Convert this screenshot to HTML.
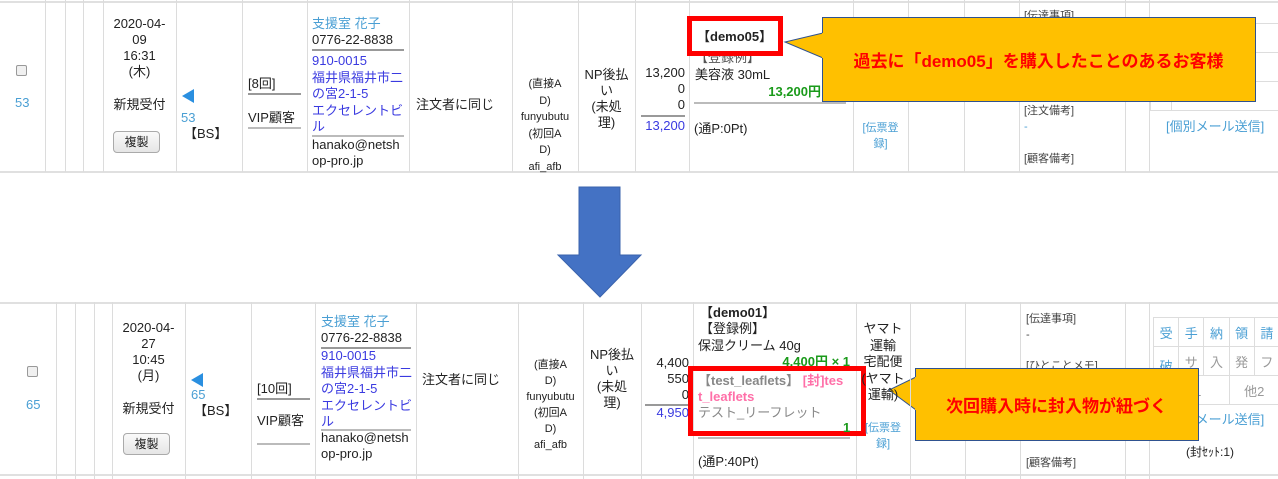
<!DOCTYPE html>
<html><head><meta charset="utf-8"><style>
*{margin:0;padding:0;box-sizing:border-box}
body{width:1278px;height:479px;background:#fff;position:relative;overflow:hidden;font-family:"Liberation Sans","Noto Sans CJK JP",sans-serif;color:#222}
.a{position:absolute;white-space:nowrap;font-size:13px;line-height:16px}
.c{text-align:center}
.r{text-align:right}
.s{font-size:11px}
.lb{color:#4a9fd4}
.pu{color:#3a3ae0}
.g{color:#1a9a1a;font-weight:bold}
.vl{position:absolute;width:1px;background:#dcdcdc}
.hl{position:absolute;height:2px;background:#e0e0e0}
.ul{position:absolute;height:2px;background:#999}
.btn{position:absolute;border:1px solid #aaa;border-radius:4px;background:linear-gradient(#fafafa,#e6e6e6);font-size:12px;text-align:center;line-height:20px}
.cb{position:absolute;width:11px;height:11px;border:1px solid #999;border-radius:2px;background:#f0f0f0}
.tri{position:absolute;width:0;height:0;border-top:7px solid transparent;border-bottom:7px solid transparent;border-right:12px solid #2a8fe0}
.call{position:absolute;background:#ffc000;border:1px solid #2f528f;color:#f00;font-weight:bold;font-size:17px;display:flex;align-items:center;justify-content:center}
.box{position:absolute;border:5px solid #f00}
.st td{border:1px solid #ddd;text-align:center;font-size:13px;color:#4a9fd4;height:29px}
</style></head><body>

<!-- TOP ROW -->
<div class="hl" style="left:0;width:1278px;top:1px"></div>
<div class="hl" style="left:0;width:1278px;top:171px"></div>
<div class="vl" style="left:45px;top:0;height:172px"></div>
<div class="vl" style="left:65px;top:0;height:172px"></div>
<div class="vl" style="left:83px;top:0;height:172px"></div>
<div class="vl" style="left:103px;top:0;height:172px"></div>
<div class="vl" style="left:176px;top:0;height:172px"></div>
<div class="vl" style="left:242px;top:0;height:172px"></div>
<div class="vl" style="left:307px;top:0;height:172px"></div>
<div class="vl" style="left:409px;top:0;height:172px"></div>
<div class="vl" style="left:512px;top:0;height:172px"></div>
<div class="vl" style="left:578px;top:0;height:172px"></div>
<div class="vl" style="left:635px;top:0;height:172px"></div>
<div class="vl" style="left:689px;top:0;height:172px"></div>
<div class="vl" style="left:853px;top:0;height:172px"></div>
<div class="vl" style="left:908px;top:0;height:172px"></div>
<div class="vl" style="left:964px;top:0;height:172px"></div>
<div class="vl" style="left:1019px;top:0;height:172px"></div>
<div class="vl" style="left:1125px;top:0;height:172px"></div>
<div class="vl" style="left:1149px;top:0;height:172px"></div>

<div class="cb" style="left:16px;top:65px"></div>
<div class="a lb" style="left:15px;top:95px">53</div>
<div class="a c" style="left:103px;width:73px;top:16px">2020-04-<br>09<br>16:31<br>(木)</div>
<div class="a c" style="left:103px;width:73px;top:97px">新規受付</div>
<div class="btn" style="left:113px;top:131px;width:47px;height:22px">複製</div>
<div class="tri" style="left:182px;top:89px"></div>
<div class="a lb" style="left:181px;top:110px">53</div>
<div class="a" style="left:184px;top:126px">【BS】</div>
<div class="a" style="left:248px;top:76px">[8回]</div>
<div class="ul" style="left:248px;top:93px;width:53px"></div>
<div class="a" style="left:248px;top:110px">VIP顧客</div>
<div class="ul" style="left:248px;top:127px;width:53px;background:#bbb"></div>
<div class="a lb" style="left:312px;top:16px">支援室 花子</div>
<div class="a" style="left:312px;top:32px">0776-22-8838</div>
<div class="ul" style="left:312px;top:49px;width:92px"></div>
<div class="a pu" style="left:312px;top:53px;line-height:16.5px">910-0015<br>福井県福井市二<br>の宮2-1-5<br>エクセレントビ<br>ル</div>
<div class="ul" style="left:312px;top:135px;width:92px;background:#bbb"></div>
<div class="a" style="left:312px;top:137px">hanako@netsh<br>op-pro.jp</div>
<div class="a" style="left:416px;top:97px">注文者に同じ</div>
<div class="a s c" style="left:512px;width:66px;top:76px;line-height:16.5px">(直接A<br>D)<br>funyubutu<br>(初回A<br>D)<br>afi_afb</div>
<div class="a c" style="left:578px;width:57px;top:67px">NP後払<br>い<br>(未処<br>理)</div>
<div class="a r" style="left:635px;width:50px;top:65px">13,200<br>0<br>0</div>
<div class="ul" style="left:641px;top:115px;width:44px"></div>
<div class="a r pu" style="left:635px;width:50px;top:118px">13,200</div>
<div class="a" style="left:695px;top:50px;color:#555">【登録例】</div>
<div class="a" style="left:695px;top:67px">美容液 30mL</div>
<div class="a g r" style="left:700px;width:121px;top:84px">13,200円</div>
<div class="ul" style="left:694px;top:102px;width:152px;background:#bbb"></div>
<div class="a" style="left:694px;top:121px">(通P:0Pt)</div>
<div class="box" style="left:687px;top:16px;width:96px;height:40px;background:#fff"></div>
<div class="a" style="left:697px;top:29px;font-weight:bold">【demo05】</div>
<div class="a s lb c" style="left:853px;width:55px;top:120px;line-height:16px">[伝票登<br>録]</div>
<div class="a s" style="left:1024px;top:8px;color:#444">[伝達事項]</div>
<div class="a s" style="left:1024px;top:103px;color:#444">[注文備考]</div>
<div class="a s lb" style="left:1024px;top:119px">-</div>
<div class="a s" style="left:1024px;top:151px;color:#444">[顧客備考]</div>
<table class="st" style="position:absolute;left:1150px;top:23px;border-collapse:collapse;width:130px">
<tr><td></td><td></td><td></td><td></td><td>請</td></tr>
<tr><td></td><td></td><td></td><td></td><td style="color:#999">フ</td></tr>
<tr><td colspan="3"></td><td colspan="2" style="color:#999">2</td></tr>
</table>
<div class="a lb" style="left:1166px;top:119px">[個別メール送信]</div>

<svg style="position:absolute;left:0;top:0" width="1278" height="479">
<polygon points="823,33 785,42 823,58" fill="#ffc000" stroke="#2f528f" stroke-width="1"/>
<polygon points="579,187 620,187 620,255 641,255 600,297 558,255 579,255" fill="#4472c4" stroke="#3a63ad" stroke-width="1"/>
<polygon points="916,377 889,390 916,410" fill="#ffc000" stroke="#2f528f" stroke-width="1"/>
</svg>
<div class="call" style="left:822px;top:17px;width:434px;height:85px;border-left:none">過去に「demo05」を購入したことのあるお客様</div>

<!-- BOTTOM ROW -->
<div class="hl" style="left:0;width:1278px;top:302px"></div>
<div class="hl" style="left:0;width:1278px;top:474px"></div>
<div class="vl" style="left:56px;top:302px;height:177px"></div>
<div class="vl" style="left:75px;top:302px;height:177px"></div>
<div class="vl" style="left:94px;top:302px;height:177px"></div>
<div class="vl" style="left:112px;top:302px;height:177px"></div>
<div class="vl" style="left:185px;top:302px;height:177px"></div>
<div class="vl" style="left:251px;top:302px;height:177px"></div>
<div class="vl" style="left:315px;top:302px;height:177px"></div>
<div class="vl" style="left:416px;top:302px;height:177px"></div>
<div class="vl" style="left:518px;top:302px;height:177px"></div>
<div class="vl" style="left:583px;top:302px;height:177px"></div>
<div class="vl" style="left:641px;top:302px;height:177px"></div>
<div class="vl" style="left:693px;top:302px;height:177px"></div>
<div class="vl" style="left:856px;top:302px;height:177px"></div>
<div class="vl" style="left:910px;top:302px;height:177px"></div>
<div class="vl" style="left:965px;top:302px;height:177px"></div>
<div class="vl" style="left:1020px;top:302px;height:177px"></div>
<div class="vl" style="left:1125px;top:302px;height:177px"></div>
<div class="vl" style="left:1149px;top:302px;height:177px"></div>

<div class="cb" style="left:27px;top:366px"></div>
<div class="a lb" style="left:26px;top:397px">65</div>
<div class="a c" style="left:112px;width:73px;top:320px">2020-04-<br>27<br>10:45<br>(月)</div>
<div class="a c" style="left:112px;width:73px;top:401px">新規受付</div>
<div class="btn" style="left:123px;top:433px;width:47px;height:22px">複製</div>
<div class="tri" style="left:191px;top:373px"></div>
<div class="a lb" style="left:191px;top:387px">65</div>
<div class="a" style="left:194px;top:403px">【BS】</div>
<div class="a" style="left:257px;top:381px">[10回]</div>
<div class="ul" style="left:257px;top:398px;width:53px"></div>
<div class="a" style="left:257px;top:413px">VIP顧客</div>
<div class="ul" style="left:257px;top:443px;width:53px;background:#bbb"></div>
<div class="a lb" style="left:321px;top:314px">支援室 花子</div>
<div class="a" style="left:321px;top:330px">0776-22-8838</div>
<div class="ul" style="left:321px;top:347px;width:90px"></div>
<div class="a pu" style="left:321px;top:348px;line-height:16.5px">910-0015<br>福井県福井市二<br>の宮2-1-5<br>エクセレントビ<br>ル</div>
<div class="ul" style="left:321px;top:429px;width:90px;background:#bbb"></div>
<div class="a" style="left:321px;top:430px">hanako@netsh<br>op-pro.jp</div>
<div class="a" style="left:422px;top:372px">注文者に同じ</div>
<div class="a s c" style="left:518px;width:65px;top:357px;line-height:16px">(直接A<br>D)<br>funyubutu<br>(初回A<br>D)<br>afi_afb</div>
<div class="a c" style="left:583px;width:58px;top:347px">NP後払<br>い<br>(未処<br>理)</div>
<div class="a r" style="left:641px;width:48px;top:355px">4,400<br>550<br>0</div>
<div class="ul" style="left:645px;top:404px;width:44px"></div>
<div class="a r pu" style="left:641px;width:48px;top:405px">4,950</div>
<div class="a" style="left:700px;top:305px;font-weight:bold">【demo01】</div>
<div class="a" style="left:700px;top:321px">【登録例】</div>
<div class="a" style="left:698px;top:338px">保湿クリーム 40g</div>
<div class="a g r" style="left:740px;width:110px;top:354px">4,400円 × 1</div>
<div class="box" style="left:688px;top:366px;width:178px;height:70px"></div>
<div class="a" style="left:698px;top:373px;color:#888;font-weight:bold">【test_leaflets】 <span style="color:#ff6fa8">[封]tes</span></div>
<div class="a" style="left:698px;top:389px;color:#ff6fa8;font-weight:bold">t_leaflets</div>
<div class="a" style="left:698px;top:405px;color:#888">テスト_リーフレット</div>
<div class="a g" style="left:843px;top:420px">1</div>
<div class="ul" style="left:698px;top:437px;width:152px;background:#bbb"></div>
<div class="a" style="left:698px;top:454px">(通P:40Pt)</div>
<div class="a c" style="left:856px;width:54px;top:321px;line-height:16.5px">ヤマト<br>運輸<br>宅配便<br>(ヤマト<br>運輸)</div>
<div class="a s lb c" style="left:856px;width:54px;top:420px;line-height:16px">[伝票登<br>録]</div>
<div class="a s" style="left:1026px;top:311px;color:#444">[伝達事項]</div>
<div class="a s" style="left:1026px;top:327px;color:#444">-</div>
<div class="a s" style="left:1026px;top:358px;color:#444">[ひとことメモ]</div>
<div class="a s" style="left:1026px;top:455px;color:#444">[顧客備考]</div>
<table class="st" style="position:absolute;left:1153px;top:317px;border-collapse:collapse;width:127px">
<tr><td>受</td><td>手</td><td>納</td><td>領</td><td>請</td></tr>
<tr><td style="vertical-align:bottom">破</td><td style="color:#999">サ</td><td style="color:#999">入</td><td style="color:#999">発</td><td style="color:#999">フ</td></tr>
<tr><td colspan="3" style="color:#999">他1</td><td colspan="2" style="color:#999">他2</td></tr>
</table>
<div class="a lb" style="left:1166px;top:412px">[個別メール送信]</div>
<div class="a" style="left:1186px;top:444px;font-size:12px">(封ｾｯﾄ:1)</div>

<div class="call" style="left:915px;top:368px;width:284px;height:73px;border-left:none">次回購入時に封入物が紐づく</div>
<div style="position:absolute;left:915px;top:368px;width:1px;height:9px;background:#2f528f"></div>
<div style="position:absolute;left:915px;top:410px;width:1px;height:31px;background:#2f528f"></div>
<div style="position:absolute;left:822px;top:17px;width:1px;height:16px;background:#2f528f"></div>
<div style="position:absolute;left:822px;top:58px;width:1px;height:44px;background:#2f528f"></div>
</body></html>
